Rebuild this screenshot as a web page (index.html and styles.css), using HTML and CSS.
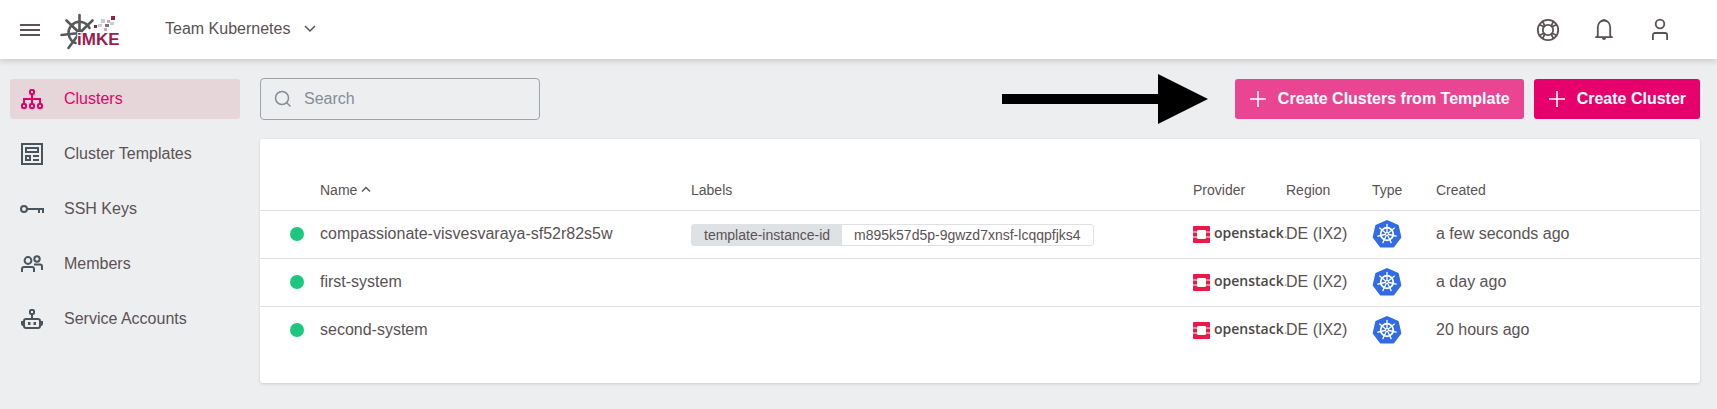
FILE: index.html
```html
<!DOCTYPE html>
<html lang="en">
<head>
<meta charset="utf-8">
<title>Clusters</title>
<link rel="stylesheet" href="styles.css">
</head>
<body>
<svg class="sprite" aria-hidden="true">
  <symbol id="openstack" viewBox="0 0 17 17">
    <path fill="#ed1844" d="M1 0h15a1 1 0 0 1 1 1v4.500h-4V5a1 1 0 0 0-1-1H5a1 1 0 0 0-1 1v.500H0V1a1 1 0 0 1 1-1zM0 11.500h4v.500a1 1 0 0 0 1 1h7a1 1 0 0 0 1-1v-.500h4V16a1 1 0 0 1-1 1H1a1 1 0 0 1-1-1zM0 6.500h4v4H0zM13 6.500h4v4h-4z"/>
    <path fill="#f5829a" d="M0 5.500h4v1H0zM13 5.500h4v1h-4zM0 10.500h4v1H0zM13 10.500h4v1h-4z"/>
  </symbol>
  <symbol id="kube" viewBox="0 0 30 30">
    <path fill="#326ce5" stroke="#326ce5" stroke-width="3" stroke-linejoin="round" d="M15 2.500 25.300 7.200 27.800 18.200 21 27H9L2.200 18.200 4.700 7.200z"/>
    <g fill="none" stroke="#fff" stroke-linecap="round">
      <circle cx="15" cy="15" r="6.300" stroke-width="1.800"/>
      <path stroke-width="1.300" d="M15 13V5.500M16.600 13.700l5.800-4.600M17 15.500l7.200 1.600M15.900 16.800l3.200 6.800M14.100 16.800l-3.200 6.800M13 15.500l-7.200 1.600M13.400 13.700 7.600 9.100"/>
      <circle cx="15" cy="15" r="1.500" stroke-width="1"/>
    </g>
  </symbol>
</svg>

<header class="topbar">
  <button class="icon-button menu" aria-label="Menu">
    <svg width="20" height="14" viewBox="0 0 20 14"><path d="M0 2h20M0 7h20M0 12h20" stroke="currentColor" stroke-width="2"/></svg>
  </button>
  <a class="logo" href="#" aria-label="iMKE">
    <svg width="62" height="38" viewBox="0 0 62 38">
      <g fill="none" stroke="#58595b" stroke-width="2.600" stroke-linecap="round">
        <path d="M29.500 15a11 11 0 1 0-14 15"/>
        <path d="M19.500 2v18M6.500 7.500l13 12.500M32.500 7.500l-13 12.500M1.500 22l18-2M8.500 35l11-15"/>
        <circle cx="19.500" cy="20" r="2.500"/>
      </g>
      <g fill="#981e4f"><path d="M51 3h4v4h-4zM34 12h3v3h-3z"/><path opacity=".4" d="M44 15h3v3h-3zM47 7h3v3h-3z"/></g>
      <path fill="#c9cfd1" d="M41 6h4v4h-4zM50 9h4v3h-4zM38 11h4v3h-4z"/>
      <path fill="#727779" d="M45 11h4v3h-4z"/>
      <text class="logo-text" x="17" y="32">iMKE</text>
    </svg>
  </a>
  <button class="project">Team Kubernetes
    <svg width="12" height="8" viewBox="0 0 12 8"><path d="m1 1 5 5 5-5" fill="none" stroke="currentColor" stroke-width="1.500"/></svg>
  </button>
  <nav class="tools" aria-label="Account">
    <button class="icon-button" aria-label="Help">
      <svg width="24" height="24" viewBox="0 0 24 24"><g fill="none" stroke="currentColor" stroke-width="1.800"><circle cx="12" cy="12" r="10.200"/><circle cx="12" cy="12" r="5.200"/><path d="m3.800 6.800 4 2M6.800 3.800l2 4M20.200 6.800l-4 2M17.200 3.800l-2 4M3.800 17.200l4-2M6.800 20.200l2-4M20.200 17.200l-4-2M17.200 20.200l-2-4"/></g></svg>
    </button>
    <button class="icon-button" aria-label="Notifications">
      <svg width="24" height="24" viewBox="0 0 24 24"><path d="M3.500 19.200h17M5.800 19V9.500c0-4 2.400-7 6.200-7s6.200 3 6.200 7V19" fill="none" stroke="currentColor" stroke-width="1.800"/><path d="M10 3a2 2 0 0 1 4 0zM10 20a2 2 0 0 0 4 0zM3 20l3-4v4zM21 20l-3-4v4z" fill="currentColor"/></svg>
    </button>
    <button class="icon-button" aria-label="User">
      <svg width="24" height="24" viewBox="0 0 24 24"><g fill="none" stroke="currentColor" stroke-width="1.800"><circle cx="12" cy="6" r="4.300"/><path d="M4.900 22v-5a2 2 0 0 1 2-2h10.200a2 2 0 0 1 2 2v5"/></g></svg>
    </button>
  </nav>
</header>

<div class="layout">
  <nav class="sidebar" aria-label="Project">
    <a class="side-link active" href="#">
      <svg width="24" height="24" viewBox="0 0 24 24"><g fill="none" stroke="currentColor" stroke-width="2"><rect x="10" y="3" width="4" height="4" rx="1"/><rect x="2" y="17" width="4" height="4" rx="1"/><rect x="10" y="17" width="4" height="4" rx="1"/><rect x="18" y="17" width="4" height="4" rx="1"/><path d="M12 7v10M4 17v-5h16v5"/></g></svg>
      Clusters</a>
    <a class="side-link" href="#">
      <svg width="24" height="24" viewBox="0 0 24 24"><g fill="none" stroke="currentColor" stroke-width="2"><path d="M2 2h20v20H2zM6 6h12v4H6zM6 14h4v4H6zM13 14h6M13 18h6"/></g></svg>
      Cluster Templates</a>
    <a class="side-link" href="#">
      <svg width="24" height="24" viewBox="0 0 24 24"><g fill="none" stroke="currentColor" stroke-width="2"><circle cx="4" cy="12" r="3"/><path d="M7 12h17M19 12v4M23 12v4"/></g></svg>
      SSH Keys</a>
    <a class="side-link" href="#">
      <svg width="24" height="24" viewBox="0 0 24 24"><g fill="none" stroke="currentColor" stroke-width="2"><circle cx="8" cy="8.500" r="3.400"/><circle cx="17" cy="7" r="2.700"/><path d="M2 20v-3a2 2 0 0 1 2-2h8a2 2 0 0 1 2 2v3M14 12.500h6a2 2 0 0 1 2 2V18"/></g></svg>
      Members</a>
    <a class="side-link" href="#">
      <svg width="24" height="24" viewBox="0 0 24 24"><g fill="none" stroke="currentColor" stroke-width="2"><rect x="10" y="3" width="4" height="4" rx="1"/><path d="M12 7v5"/><rect x="4" y="12" width="16" height="9" rx="2"/></g><path d="M8 15h2.500v3H8zM13.500 15H16v3h-2.500zM1 14h3v5H3a2 2 0 0 1-2-2zM20 14h3v3a2 2 0 0 1-2 2h-1z" fill="currentColor"/></svg>
      Service Accounts</a>
  </nav>

  <main class="content">
    <div class="toolbar">
      <label class="search">
        <svg width="18" height="18" viewBox="0 0 18 18"><g fill="none" stroke="currentColor" stroke-width="1.500"><circle cx="8" cy="8" r="6.500"/><path d="m12.500 12.500 4 4"/></g></svg>
        <input type="search" placeholder="Search" aria-label="Search">
      </label>
      <svg class="arrow" width="206" height="50" viewBox="0 0 206 50" aria-hidden="true"><path d="M0 20h156V0l50 25-50 25V30H0z"/></svg>
      <button class="action soft"><svg width="16" height="16" viewBox="0 0 16 16"><path d="M8 0v16M0 8h16" stroke="currentColor" stroke-width="1.600"/></svg>Create Clusters from Template</button>
      <button class="action"><svg width="16" height="16" viewBox="0 0 16 16"><path d="M8 0v16M0 8h16" stroke="currentColor" stroke-width="1.600"/></svg>Create Cluster</button>
    </div>

    <section class="card">
      <table class="clusters">
        <colgroup><col class="c-status"><col class="c-name"><col><col class="c-provider"><col class="c-region"><col class="c-type"><col class="c-created"></colgroup>
        <thead>
          <tr><th></th><th>Name <svg width="10" height="7" viewBox="0 0 10 7"><path d="m1 5.500 4-4 4 4" fill="none" stroke="currentColor" stroke-width="1.400"/></svg></th><th>Labels</th><th>Provider</th><th>Region</th><th>Type</th><th>Created</th></tr>
        </thead>
        <tbody>
          <tr><td><span class="dot"></span></td><td>compassionate-visvesvaraya-sf52r82s5w</td><td><span class="tag"><span class="tag-key">template-instance-id</span><span class="tag-value">m895k57d5p-9gwzd7xnsf-lcqqpfjks4</span></span></td><td><span class="provider"><svg width="17" height="17"><use href="#openstack"/></svg><span class="provider-name">openstack<span class="mark">.</span></span></span></td><td>DE (IX2)</td><td><svg class="kube" width="30" height="30"><use href="#kube"/></svg></td><td>a few seconds ago</td></tr>
          <tr><td><span class="dot"></span></td><td>first-system</td><td></td><td><span class="provider"><svg width="17" height="17"><use href="#openstack"/></svg><span class="provider-name">openstack<span class="mark">.</span></span></span></td><td>DE (IX2)</td><td><svg class="kube" width="30" height="30"><use href="#kube"/></svg></td><td>a day ago</td></tr>
          <tr><td><span class="dot"></span></td><td>second-system</td><td></td><td><span class="provider"><svg width="17" height="17"><use href="#openstack"/></svg><span class="provider-name">openstack<span class="mark">.</span></span></span></td><td>DE (IX2)</td><td><svg class="kube" width="30" height="30"><use href="#kube"/></svg></td><td>20 hours ago</td></tr>
        </tbody>
      </table>
    </section>
  </main>
</div>
</body>
</html>
```
FILE: styles.css
```css
* { box-sizing: border-box; }

body {
  margin: 0;
  min-height: 100vh;
  background: #edeef0;
  color: #5b5254;
  font: 16px/24px "Liberation Sans", Arial, sans-serif;
}

svg { display: block; flex: none; }
button { border: 0; background: none; color: inherit; font: inherit; cursor: pointer; }
.sprite { display: none; }

.topbar {
  position: relative;
  display: flex;
  align-items: center;
  height: 59px;
  padding: 0 45px 0 20px;
  background: #fff;
  box-shadow: 0 2px 6px rgba(0, 0, 0, 0.16);
}
.icon-button { display: flex; padding: 0; }
.logo { margin: 4px 0 0 20px; }
.logo-text {
  fill: #981e4f;
  stroke: #fff;
  stroke-width: 2px;
  paint-order: stroke;
  font: bold 17px "Liberation Sans", Arial, sans-serif;
}
.project { display: flex; align-items: center; gap: 14px; margin-left: 43px; padding: 0 0 2px; }
.tools { display: flex; gap: 32px; margin-left: auto; }

.layout { display: flex; gap: 20px; padding: 19px 17px 26px 10px; }
.sidebar { display: flex; flex: 0 0 230px; flex-direction: column; gap: 15px; padding-top: 1px; }
.side-link {
  display: flex;
  align-items: center;
  gap: 20px;
  height: 40px;
  padding: 0 10px;
  border-radius: 3px;
  color: inherit;
  text-decoration: none;
}
.side-link svg { color: #4a545d; }
.side-link.active, .side-link.active svg { color: #e6006b; }
.side-link.active { background: #e6d6d9; }

.content { flex: 1; min-width: 0; }
.toolbar { display: flex; align-items: center; gap: 10px; margin-bottom: 19px; }
.search {
  display: flex;
  align-items: center;
  gap: 12px;
  width: 280px;
  height: 42px;
  margin-right: auto;
  padding: 0 13px;
  border: 1px solid #9ba3ad;
  border-radius: 4px;
  color: #848d97;
}
.search input { flex: 1; min-width: 0; padding: 0; border: 0; outline: 0; background: none; color: inherit; font: inherit; }
.search input::placeholder { color: inherit; opacity: 1; }
.arrow { margin: -4px 17px -4px 0; }
.action {
  display: flex;
  align-items: center;
  gap: 12px;
  height: 40px;
  padding: 0 14px 0 15px;
  border-radius: 3px;
  background: #e6006b;
  color: #fff;
  font-weight: bold;
}
.action.soft { background: #e94592; }

.card {
  padding: 31px 0 29px;
  border-radius: 3px;
  background: #fff;
  box-shadow: 0 1px 3px rgba(0, 0, 0, 0.14);
}
.clusters { width: 100%; border-collapse: collapse; table-layout: fixed; }
.c-status { width: 60px; }
.c-name { width: 371px; }
.c-provider { width: 93px; }
.c-region { width: 86px; }
.c-type { width: 64px; }
.c-created { width: 264px; }
th, td { height: 48px; padding: 0; text-align: left; white-space: nowrap; }
th { height: 40px; font-size: 14px; font-weight: normal; }
th svg { display: inline-block; vertical-align: 2px; }
tbody tr { border-top: 1px solid #dfe1e3; }
.dot { display: block; width: 14px; height: 14px; margin-left: 30px; border-radius: 50%; background: #1fc77e; }
.tag {
  display: inline-flex;
  border: 1px solid #dfe2e5;
  border-radius: 3px;
  font-size: 14px;
  line-height: 20px;
  vertical-align: middle;
}
.tag-key { padding: 0 12px; background: #dee2e5; }
.tag-value { padding: 0 12px; }
.provider { display: flex; align-items: center; gap: 4px; }
.provider-name { padding-bottom: 2px; color: #4d4845; font: 600 14px/20px "Open Sans", sans-serif; }
.mark { color: #a5a2a0; font-weight: 400; }
```
